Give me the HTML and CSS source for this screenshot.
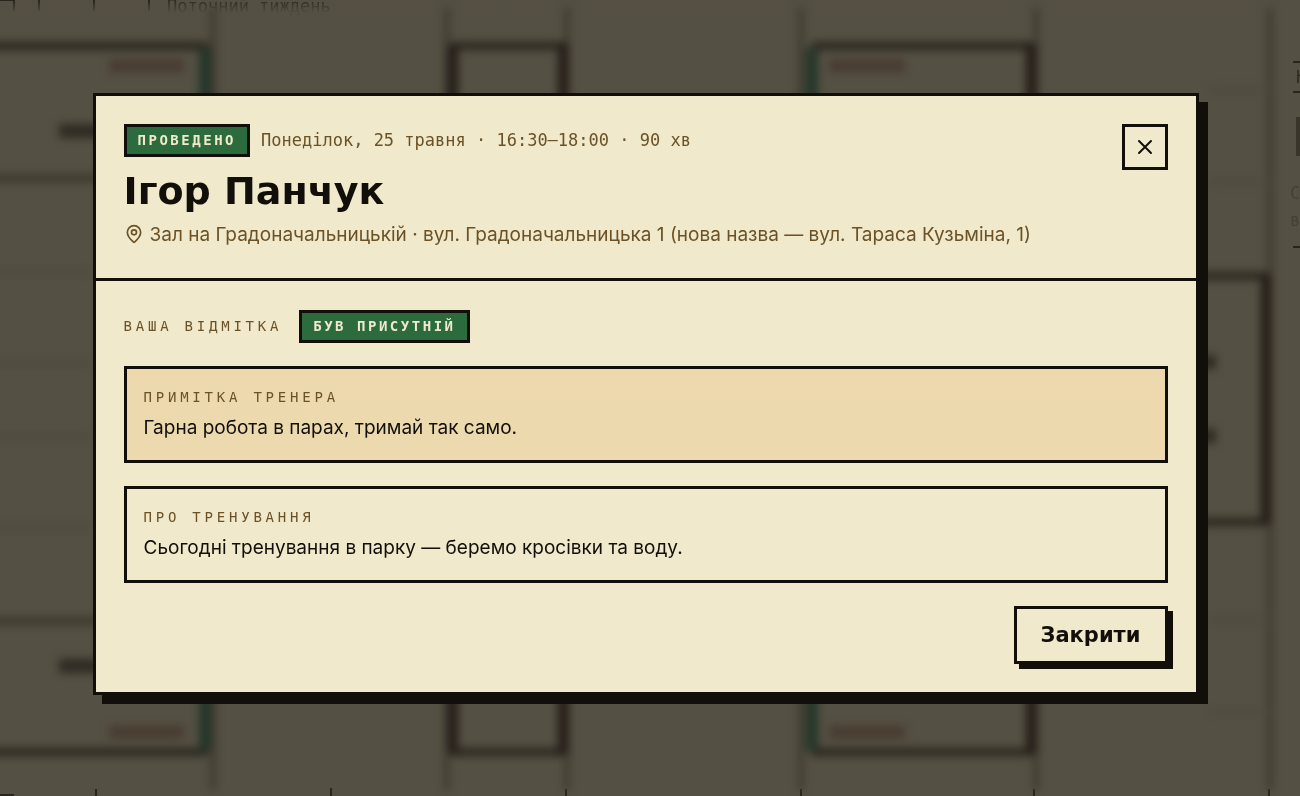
FILE: index.html
```html
<!DOCTYPE html>
<html lang="uk">
<head>
<meta charset="utf-8">
<meta name="viewport" content="width=device-width, initial-scale=1">
<title>Ігор Панчук</title>
<link rel="stylesheet" href="styles.css">
</head>
<body>
<svg class="schedule" viewBox="0 0 1300 796" preserveAspectRatio="xMidYMid slice" aria-hidden="true">
  <defs>
    <filter id="soft" x="-5%" y="-5%" width="110%" height="110%" color-interpolation-filters="sRGB"><feGaussianBlur stdDeviation="4"/></filter>
    <linearGradient id="fade" x1="0" y1="0" x2="0" y2="1"><stop offset="0" stop-color="#545043" stop-opacity="0"/><stop offset="1" stop-color="#545043"/></linearGradient>
  </defs>
  <g class="edges">
    <path d="M0 0H14V11M39 0V11M94 0V11M149 0V11M0 795H14M96 789V796M331 788V796M566 789V796M801 789V796M1034 789V796M1269 789V796M1293 62H1300M1293 92H1300M1293 247H1300"/>
    <path class="edge-block" d="M1298 117V156"/>
    <text x="167" y="12">Поточний тиждень</text>
    <text x="1296" y="83">Н</text>
    <text class="dim" x="1290" y="199">С</text>
    <text class="dim" x="1290" y="226">ві</text>
  </g>
  <rect width="1280" height="14" fill="url(#fade)"/>
  <g filter="url(#soft)" fill="none">
    <path class="column" d="M213 8V790M447 8V790M567 8V790M801 8V790M1036 8V790M1270 8V790"/>
    <path class="row" d="M-30 272H92M-30 363H92M-30 437H92M-30 527H92M1208 90H1270M1208 182H1270M1208 620H1270M1208 712H1270"/>
    <path class="event-edge" d="M-30 46H208M453 46H564M812 46H1032M-30 752H208M453 752H564M812 752H1032M1200 276H1267M1200 522H1267"/>
    <path class="event-edge event-edge-faint" d="M-30 178H100M-30 621H100"/>
    <path class="event-side" d="M453 44V754M563 44V754M1031 44V754M1266 274V524"/>
    <path class="event-done" d="M205 48V751M812 48V751"/>
    <path class="event-tag" d="M109 66H184M829 66H905M109 732H184M829 732H905"/>
    <path class="event-name" d="M59 131H100M59 666H100M1200 362H1216M1200 436H1216"/>
  </g>
</svg>

<div class="overlay">
  <section class="modal" role="dialog" aria-modal="true" aria-labelledby="trainer">
    <header class="modal-header">
      <div class="summary">
        <div class="meta">
          <span class="badge">ПРОВЕДЕНО</span>
          <span class="date">Понеділок, 25 травня · 16:30–18:00 · 90 хв</span>
        </div>
        <h1 class="title" id="trainer">Ігор Панчук</h1>
        <p class="place">
          <svg class="pin" viewBox="0 0 24 24" aria-hidden="true"><path d="M20 10c0 4.993-5.539 10.193-7.399 11.799a1 1 0 0 1-1.202 0C9.539 20.193 4 14.993 4 10a8 8 0 0 1 16 0"/><circle cx="12" cy="10" r="3"/></svg>
          <span>Зал на Градоначальницькій · вул. Градоначальницька 1 (нова назва — вул. Тараса Кузьміна, 1)</span>
        </p>
      </div>
      <button class="close" type="button" aria-label="Закрити вікно"><svg class="cross" viewBox="0 0 24 24" aria-hidden="true"><path d="M18 6 6 18M6 6l12 12"/></svg></button>
    </header>
    <div class="modal-body">
      <div class="attendance">
        <span class="label">ВАША ВІДМІТКА</span>
        <span class="badge">БУВ ПРИСУТНІЙ</span>
      </div>
      <article class="note note-trainer">
        <h2 class="label">ПРИМІТКА ТРЕНЕРА</h2>
        <p class="text">Гарна робота в парах, тримай так само.</p>
      </article>
      <article class="note">
        <h2 class="label">ПРО ТРЕНУВАННЯ</h2>
        <p class="text">Сьогодні тренування в парку — беремо кросівки та воду.</p>
      </article>
      <footer class="actions"><button class="button" type="button">Закрити</button></footer>
    </div>
  </section>
</div>
</body>
</html>
```
FILE: styles.css
```css
:root {
  --paper: #f0e9cc;
  --sand: #ecdaae;
  --ink: #120f0a;
  --brown: #6b5226;
  --green: #2b6b3d;
  --shade: #545043;
  --mono: "DejaVu Sans Mono", monospace;
  --sans: Inter, "Noto Sans", sans-serif;
  --display: "DejaVu Sans", sans-serif;
}

* {
  box-sizing: border-box;
}

body {
  margin: 0;
  min-height: 100vh;
  background: var(--shade);
  color: var(--ink);
  font-family: var(--sans);
}

h1, h2, p {
  margin: 0;
}

.schedule {
  position: fixed;
  inset: 0;
  width: 100%;
  height: 100%;
}

.column { stroke: #403b30; stroke-width: 6; }
.row { stroke: #504b3f; stroke-width: 5; }
.event-edge { stroke: #2c261f; stroke-width: 8; }
.event-edge-faint { stroke: #3e392e; }
.event-side { stroke: #241d18; stroke-width: 10; }
.event-done { stroke: #25362a; stroke-width: 12; }
.event-tag { stroke: #493c30; stroke-width: 13; }
.event-name { stroke: #302b23; stroke-width: 14; }
.edges path { fill: none; stroke: #29251c; stroke-width: 2; }
.edges .edge-block { stroke: #39352b; stroke-width: 4; }
.edges text { fill: #302b21; font: 17px var(--mono); }
.edges .dim { fill: #464135; }

.overlay {
  position: relative;
  display: flex;
  align-items: center;
  justify-content: center;
  min-height: 100vh;
  padding: 16px 24px 25px 15px;
}

.modal {
  width: 88%;
  max-width: 1106px;
  border: 3px solid var(--ink);
  background: var(--paper);
  box-shadow: 9px 9px 0 var(--ink);
}

.modal-header {
  display: flex;
  align-items: flex-start;
  justify-content: space-between;
  gap: 24px;
  padding: 28px;
  border-bottom: 3px solid var(--ink);
}

.meta {
  display: flex;
  flex-wrap: wrap;
  align-items: center;
  gap: 11px;
}

.badge {
  padding: 0 11px;
  border: 3px solid var(--ink);
  background: var(--green);
  color: var(--paper);
  font: bold 14px/27px var(--mono);
  letter-spacing: 0.18em;
}

.date {
  color: var(--brown);
  font: 17px/24px var(--mono);
}

.title {
  margin: 14px 0 8px;
  font: bold 38px/40px var(--display);
}

.place {
  display: flex;
  align-items: center;
  gap: 6px;
  color: var(--brown);
  font-size: 19px;
  line-height: 31px;
}

.pin, .cross {
  flex: none;
  width: 20px;
  height: 20px;
  fill: none;
  stroke: currentColor;
  stroke-width: 2;
  stroke-linecap: round;
  stroke-linejoin: round;
}

.close {
  display: grid;
  flex: none;
  place-items: center;
  width: 46px;
  height: 46px;
  padding: 0;
  border: 3px solid var(--ink);
  background: var(--paper);
  color: var(--ink);
}

.cross {
  width: 24px;
  height: 24px;
}

.modal-body {
  display: flex;
  flex-direction: column;
  gap: 23px;
  padding: 29px 28px 28px;
}

.attendance {
  display: flex;
  flex-wrap: wrap;
  align-items: center;
  gap: 17px;
}

.label {
  color: var(--brown);
  font: 14px/22px var(--mono);
  letter-spacing: 0.27em;
}

.note {
  display: grid;
  gap: 4px;
  padding: 17px;
  border: 3px solid var(--ink);
}

.note-trainer {
  background: var(--sand);
}

.text {
  font-size: 19px;
  line-height: 31px;
}

.actions {
  display: flex;
  justify-content: flex-end;
}

.button {
  padding: 14px 24px;
  border: 3px solid var(--ink);
  background: var(--paper);
  box-shadow: 5px 5px 0 var(--ink);
  color: var(--ink);
  font: bold 21px/24px var(--display);
}
```
